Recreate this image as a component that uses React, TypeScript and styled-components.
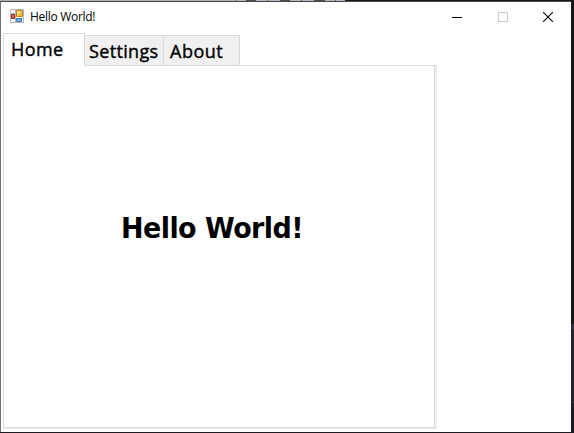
import React from "react";
import styled, { createGlobalStyle } from "styled-components";

const GlobalStyle = createGlobalStyle`
  * { box-sizing: border-box; }
  body { margin: 0; background: #1b1b1b; overflow: hidden; }
`;

const Desktop = styled.main`
  width: 574px;
  height: 433px;
  display: flex;
  flex-direction: column;
  background: linear-gradient(#171717 0 324px, #30313a 324px 330px, #22232b 330px 402px, #3a3a3e 402px 403px, #1c1c20 403px);
`;

const BackdropStrip = styled.div`
  height: 1px;
  width: 345px;
  flex: none;
  background: linear-gradient(90deg, #a9b3b9 0 236px, #62676b 236px 237px, #b3bac3 237px 246px, #4a4d53 246px 256px, #b3bac3 256px 267px, #62676b 267px 268px, #b3bac3 268px 280px, #4a4d53 280px 290px, #b3bac3 290px 301px, #62676b 301px 302px, #b3bac3 302px 314px, #4a4d53 314px 325px, #b3bac3 325px 335px, #62676b 335px 336px, #b3bac3 336px);
`;

const Window = styled.section`
  width: 571px;
  height: 431px;
  display: flex;
  flex-direction: column;
  background: #fff;
  border-top: 1px solid #48494b;
  border-left: 1px solid #737373;
`;

const TitleBar = styled.header`
  height: 31px;
  flex: none;
  display: flex;
  align-items: flex-start;
  padding-left: 9px;
`;

const AppIcon = styled.svg`
  width: 14px;
  height: 14px;
  margin-top: 7px;
  flex: none;
`;

const Title = styled.h1`
  margin: 6px 0 0 6px;
  font: 400 12px/17px "Open Sans", sans-serif;
  letter-spacing: -0.3px;
  color: #000;
  white-space: nowrap;
`;

const Controls = styled.div`
  display: flex;
  margin-left: auto;
`;

const ControlButton = styled.button<{ $muted?: boolean }>`
  width: 45.5px;
  height: 29px;
  padding: 0;
  border: 0;
  background: transparent;
  color: ${(p) => (p.$muted ? "#c9c9c9" : "#000")};
  display: flex;
  align-items: center;
  justify-content: center;
`;

const Tabs = styled.nav`
  height: 33px;
  flex: none;
  display: flex;
  align-items: flex-end;
  padding-left: 2px;
`;

const Tab = styled.button<{ $width: number; $active?: boolean; $inset: number; $spacing: number }>`
  width: ${(p) => p.$width}px;
  height: ${(p) => (p.$active ? 33 : 31)}px;
  padding: ${(p) => (p.$active ? "0 0 2px" : "1px 0 0")};
  padding-left: ${(p) => p.$inset}px;
  border: 1px solid #d9d9d9;
  border-left-width: ${(p) => (p.$active ? 1 : 0)}px;
  border-bottom-width: ${(p) => (p.$active ? 0 : 1)}px;
  background: ${(p) => (p.$active ? "#fff" : "#f0f0f0")};
  font: 400 18px/28px "Open Sans", sans-serif;
  letter-spacing: ${(p) => p.$spacing}px;
  -webkit-text-stroke: 0.4px #000;
  text-align: left;
  white-space: nowrap;
  color: #000;
  position: relative;
  z-index: ${(p) => (p.$active ? 1 : 0)};
`;

const TabPage = styled.article`
  width: 434px;
  height: 364px;
  margin: -1px 0 0 2px;
  flex: none;
  display: flex;
  align-items: flex-start;
  padding: 145px 0 0 117px;
  border: 1px solid #d9d9d9;
  border-right: 2px solid #eee;
  border-bottom: 1px solid #eee;
  box-shadow: inset -1px -1px #d9d9d9;
`;

const Heading = styled.h2`
  margin: 0;
  font: 700 29px/34px "DejaVu Sans", sans-serif;
  letter-spacing: -0.6px;
  transform: scaleX(0.93);
  transform-origin: left;
  white-space: nowrap;
  color: #000;
`;

export default function App() {
  return (
    <>
      <GlobalStyle />
      <Desktop>
        <BackdropStrip />
        <Window>
          <TitleBar>
            <AppIcon viewBox="0 0 14 14">
              <defs>
                <linearGradient id="gold" x2="1" y2="1">
                  <stop stopColor="#fff0a0" />
                  <stop offset="1" stopColor="#e8a818" />
                </linearGradient>
              </defs>
              <path d="M.5.5h13v13H.5zM.5 4.5h5M5.5.5v13M5.5 9.5h8" fill="#fff" stroke="#b5b5b5" />
              <path d="M6.5 1.5h6v6h-6z" fill="url(#gold)" stroke="#ba8420" />
              <path d="M1.5 5.5h3v4h-3z" fill="#d46a5c" stroke="#9e2525" />
              <path d="M6.5 9.5h5v3h-5z" fill="#72b4f4" stroke="#3d79bd" />
            </AppIcon>
            <Title>Hello World!</Title>
            <Controls>
              <ControlButton aria-label="Minimize">
                <svg width="10" height="10"><path d="M0 5.5h10" stroke="currentColor" /></svg>
              </ControlButton>
              <ControlButton aria-label="Maximize" $muted>
                <svg width="10" height="10"><path d="M.5.5h9v9h-9z" fill="none" stroke="currentColor" /></svg>
              </ControlButton>
              <ControlButton aria-label="Close">
                <svg width="10" height="10"><path d="m0 0 10 10M10 0 0 10" stroke="currentColor" strokeWidth="1.1" /></svg>
              </ControlButton>
            </Controls>
          </TitleBar>
          <Tabs>
            <Tab $width={82} $inset={7} $spacing={0.4} $active>Home</Tab>
            <Tab $width={79} $inset={4} $spacing={0.35}>Settings</Tab>
            <Tab $width={76} $inset={6} $spacing={0.5}>About</Tab>
          </Tabs>
          <TabPage>
            <Heading>Hello World!</Heading>
          </TabPage>
        </Window>
      </Desktop>
    </>
  );
}
